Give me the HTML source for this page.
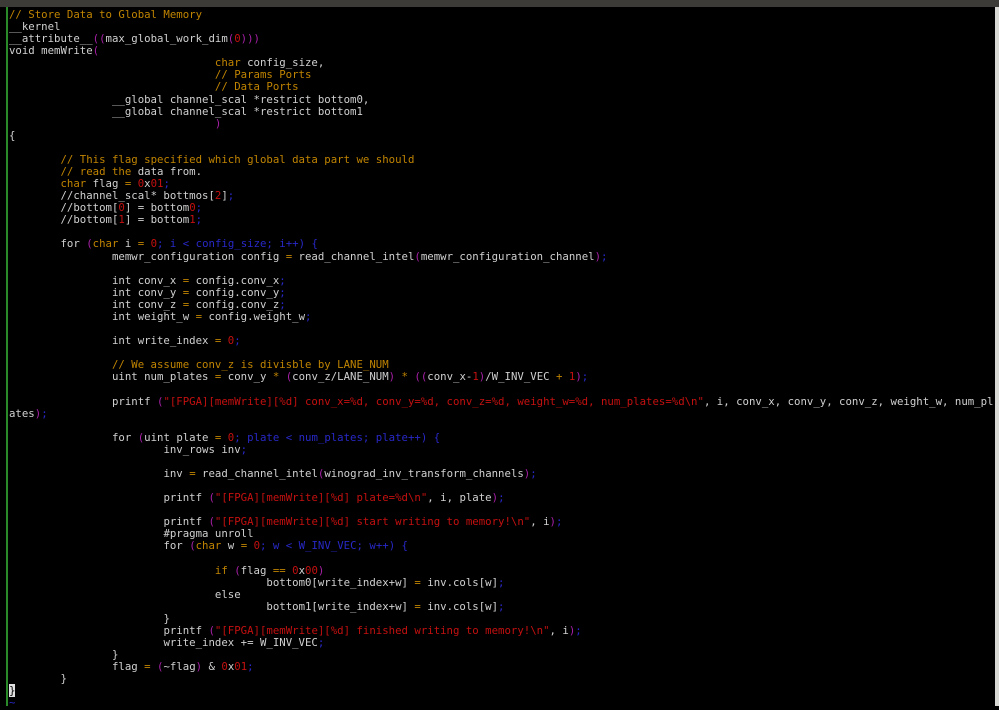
<!DOCTYPE html>
<html><head><meta charset="utf-8"><style>
html,body{margin:0;padding:0;background:#000;width:999px;height:706px;overflow:hidden}
#top{position:absolute;left:0;top:0;width:999px;height:7px;background:#3c3b37}
#gl{position:absolute;left:6px;top:7px;width:2px;height:699px;background:#2a8a2a}
#rb{position:absolute;left:995px;top:7px;width:4px;height:699px;background:#d8d8d4}
pre{position:absolute;left:9px;top:9px;margin:0;font-family:"DejaVu Sans Mono","Liberation Mono",monospace;font-size:10.7px;line-height:12.08px;color:#d0d0d0;tab-size:8;-moz-tab-size:8;white-space:pre}
.c{color:#c08400}.r{color:#c41010}.p{color:#a820a8}.b{color:#2828c8}
.cur{background:#e0e0e0;color:#000}
</style></head><body>
<div id="top"></div><div id="gl"></div><div id="rb"></div>
<pre><span class="c">// Store Data to Global Memory</span>
__kernel
__attribute__<span class="p">((</span>max_global_work_dim<span class="p">(</span><span class="r">0</span><span class="p">)))</span>
void memWrite<span class="p">(</span>
				<span class="c">char</span> config_size,
				<span class="c">// Params Ports</span>
				<span class="c">// Data Ports</span>
		__global channel_scal *restrict bottom0,
		__global channel_scal *restrict bottom1
				<span class="p">)</span>
{

	<span class="c">// This flag specified which global data part we should</span>
	<span class="c">// read the</span> data from.
	<span class="c">char</span> flag <span class="c">=</span> <span class="r">0</span>x<span class="r">01</span><span class="b">;</span>
	//channel_scal* bottmos[<span class="r">2</span>]<span class="b">;</span>
	//bottom[<span class="r">0</span>] = bottom<span class="r">0</span><span class="b">;</span>
	//bottom[<span class="r">1</span>] = bottom<span class="r">1</span><span class="b">;</span>

	for <span class="p">(</span><span class="c">char</span> i <span class="c">=</span> <span class="r">0</span><span class="b">; i &lt; config_size; i++) {</span>
		memwr_configuration config <span class="c">=</span> read_channel_intel<span class="p">(</span>memwr_configuration_channel<span class="p">)</span><span class="b">;</span>

		int conv_x <span class="c">=</span> config.conv_x<span class="b">;</span>
		int conv_y <span class="c">=</span> config.conv_y<span class="b">;</span>
		int conv_z <span class="c">=</span> config.conv_z<span class="b">;</span>
		int weight_w <span class="c">=</span> config.weight_w<span class="b">;</span>

		int write_index <span class="c">=</span> <span class="r">0</span><span class="b">;</span>

		<span class="c">// We assume conv_z is divisble by LANE_NUM</span>
		uint num_plates <span class="c">=</span> conv_y <span class="c">*</span> <span class="p">(</span>conv_z/LANE_NUM<span class="p">)</span> <span class="c">*</span> <span class="p">((</span>conv_x-<span class="r">1</span><span class="p">)</span>/W_INV_VEC <span class="c">+</span> <span class="r">1</span><span class="p">)</span><span class="b">;</span>

		printf <span class="p">(</span><span class="r">"[FPGA][memWrite][%d] conv_x=%d, conv_y=%d, conv_z=%d, weight_w=%d, num_plates=%d\n"</span>, i, conv_x, conv_y, conv_z, weight_w, num_pl
ates<span class="p">)</span><span class="b">;</span>

		for <span class="p">(</span>uint plate <span class="c">=</span> <span class="r">0</span><span class="b">; plate &lt; num_plates; plate++) {</span>
			inv_rows inv<span class="b">;</span>

			inv <span class="c">=</span> read_channel_intel<span class="p">(</span>winograd_inv_transform_channels<span class="p">)</span><span class="b">;</span>

			printf <span class="p">(</span><span class="r">"[FPGA][memWrite][%d] plate=%d\n"</span>, i, plate<span class="p">)</span><span class="b">;</span>

			printf <span class="p">(</span><span class="r">"[FPGA][memWrite][%d] start writing to memory!\n"</span>, i<span class="p">)</span><span class="b">;</span>
			#pragma unroll
			for <span class="p">(</span><span class="c">char</span> w <span class="c">=</span> <span class="r">0</span><span class="b">; w &lt; W_INV_VEC; w++) {</span>

				<span class="c">if</span> <span class="p">(</span>flag <span class="c">==</span> <span class="r">0</span>x<span class="r">00</span><span class="p">)</span>
					bottom0[write_index+w] <span class="c">=</span> inv.cols[w]<span class="b">;</span>
				else
					bottom1[write_index+w] <span class="c">=</span> inv.cols[w]<span class="b">;</span>
			}
			printf <span class="p">(</span><span class="r">"[FPGA][memWrite][%d] finished writing to memory!\n"</span>, i<span class="p">)</span><span class="b">;</span>
			write_index += W_INV_VEC<span class="b">;</span>
		}
		flag <span class="c">=</span> <span class="p">(</span>~flag<span class="p">)</span> &amp; <span class="r">0</span>x<span class="r">01</span><span class="b">;</span>
	}
<span class="cur">}</span>
<span class="b">~</span></pre>
</body></html>
